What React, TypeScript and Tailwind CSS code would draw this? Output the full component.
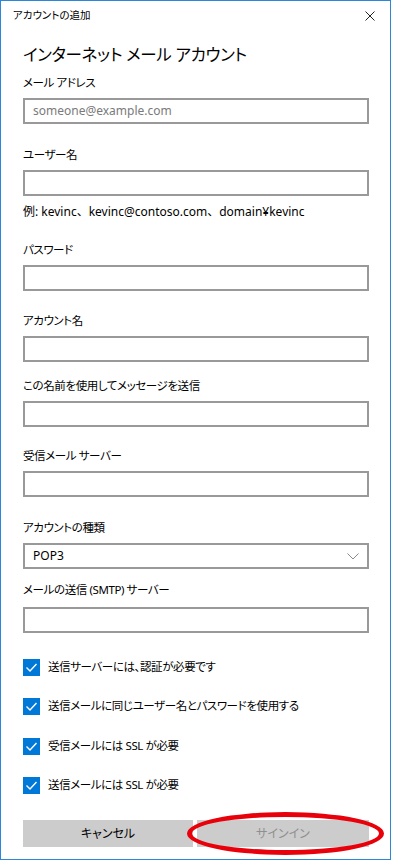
import React from 'react';

const Label: React.FC<{ text: string; mt: string }> = ({ text, mt }) => (
  <div className={`${mt} h-[18px] text-[11.5px] tracking-[-0.4px] leading-[18px] text-black`}>{text}</div>
);

const Input: React.FC<{ mt?: string; placeholder?: string }> = ({ mt = 'mt-[6px]', placeholder }) => (
  <div className={`${mt} h-[26px] border-2 border-[#999999] bg-white flex items-center px-[8px]`}>
    {placeholder && <span className="text-[12px] text-[#7a7a7a] leading-none">{placeholder}</span>}
  </div>
);

const Check: React.FC<{ text: string; mt: string }> = ({ text, mt }) => (
  <div className={`${mt} h-[18px] flex items-center gap-[8px]`}>
    <div className="w-[17px] h-[17px] bg-[#0078d7] flex items-center justify-center">
      <svg width="13" height="13" viewBox="0 0 13 13" fill="none">
        <path d="M1.5 6.5 L5 10 L11.5 3" stroke="white" strokeWidth="1.4" />
      </svg>
    </div>
    <span className="text-[11.5px] tracking-[-0.4px] leading-[18px] text-black">{text}</span>
  </div>
);

const App: React.FC = () => {
  return (
    <div className="w-[393px] h-[863px] bg-white font-['Noto_Sans','Noto_Sans_CJK_JP',sans-serif] [font-feature-settings:'palt']">
      <div className="relative w-[391px] h-[860px] border border-[#2b88d8] bg-white">
        <div className="h-[29px] flex items-center justify-between pl-[12px] pr-[15px]">
          <span className="text-[10.5px] leading-none text-black">アカウントの追加</span>
          <svg width="10" height="10" viewBox="0 0 10 10">
            <path d="M0.5 0.5 L9.5 9.5 M9.5 0.5 L0.5 9.5" stroke="#222" strokeWidth="1" />
          </svg>
        </div>
        <div className="pl-[22px] pr-[21px]">
          <div className="mt-[13px] h-[24px] text-[16.5px] tracking-[-0.3px] leading-[24px] text-black">
            インターネット メール アカウント
          </div>
          <Label text="メール アドレス" mt="mt-[7px]" />
          <Input placeholder="someone@example.com" />
          <Label text="ユーザー名" mt="mt-[22px]" />
          <Input />
          <div className="mt-[7px] h-[18px] text-[12px] leading-[18px] text-black [font-feature-settings:normal]">
            例: kevinc、kevinc@contoso.com、domain¥kevinc
          </div>
          <Label text="パスワード" mt="mt-[20px]" />
          <Input />
          <Label text="アカウント名" mt="mt-[21px]" />
          <Input />
          <Label text="この名前を使用してメッセージを送信" mt="mt-[15px]" />
          <Input />
          <Label text="受信メール サーバー" mt="mt-[20px]" />
          <Input />
          <Label text="アカウントの種類" mt="mt-[22px]" />
          <div className="mt-[6px] h-[26px] border-2 border-[#999999] bg-white flex items-center justify-between pl-[8px] pr-[8px]">
            <span className="text-[12px] leading-none text-black">POP3</span>
            <svg width="12" height="7" viewBox="0 0 12 7" fill="none">
              <path d="M0.5 0.5 L6 6 L11.5 0.5" stroke="#8a8a8a" strokeWidth="1" />
            </svg>
          </div>
          <Label text="メールの送信 (SMTP) サーバー" mt="mt-[12px]" />
          <Input mt="mt-[8px]" />
          <Check text="送信サーバーには、認証が必要です" mt="mt-[25px]" />
          <Check text="送信メールに同じユーザー名とパスワードを使用する" mt="mt-[21px]" />
          <Check text="受信メールには SSL が必要" mt="mt-[22px]" />
          <Check text="送信メールには SSL が必要" mt="mt-[21px]" />
          <div className="mt-[26px] flex gap-[4px]">
            <div className="w-[170px] h-[27px] bg-[#cccccc] flex items-center justify-center text-[12px] text-black">
              キャンセル
            </div>
            <div className="flex-1 h-[27px] bg-[#cccccc] flex items-center justify-center text-[12px] text-[#8f8f8f]">
              サインイン
            </div>
          </div>
        </div>
        <div className="absolute left-[186px] top-[811px] w-[197px] h-[43px] rounded-[50%] border-[5px] border-[#e8000b]" />
      </div>
    </div>
  );
};

export default App;
